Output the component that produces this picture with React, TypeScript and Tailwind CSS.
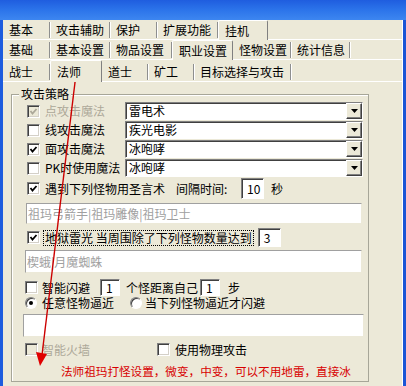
import React from "react";

type Tab = { t: string; w: string; sel?: boolean; pl?: string };

const row1: Tab[] = [
  { t: "基本", w: "w-[47px]" },
  { t: "攻击辅助", w: "w-[60px]" },
  { t: "保护", w: "w-[47px]" },
  { t: "扩展功能", w: "w-[61px]" },
  { t: "挂机", w: "w-[50px]", sel: true },
];
const row2: Tab[] = [
  { t: "基础", w: "w-[47px]" },
  { t: "基本设置", w: "w-[60px]" },
  { t: "物品设置", w: "w-[62px]" },
  { t: "职业设置", w: "w-[61px]", sel: true },
  { t: "怪物设置", w: "w-[58px]" },
  { t: "统计信息", w: "w-[59px]" },
];
const row3: Tab[] = [
  { t: "战士", w: "w-[47px]" },
  { t: "法师", w: "w-[52px]", sel: true },
  { t: "道士", w: "w-[46px]" },
  { t: "矿工", w: "w-[46px]" },
  { t: "目标选择与攻击", w: "w-[97px]" },
];

function TabRow({ tabs, h }: { tabs: Tab[]; h: string }) {
  return (
    <div className={`flex items-end border-b border-white ${h}`}>
      {tabs.map((tb) =>
        tb.sel ? (
          <div
            key={tb.t}
            className={`${tb.w} relative z-10 -mb-px flex h-[calc(100%+1px)] items-center self-stretch whitespace-nowrap rounded-t-[2px] border-l border-t border-r border-white border-r-[#808080] bg-[#ECE9D8] pl-[6px] text-[12px] leading-[14px]`}
          >
            {tb.t}
          </div>
        ) : (
          <div
            key={tb.t}
            className={`${tb.w} mb-[1px] flex h-[16px] items-center whitespace-nowrap border-r border-[#8E8F8F] pl-[6px] text-[12px] leading-[14px] shadow-[1px_0_0_#ffffff]`}
          >
            {tb.t}
          </div>
        )
      )}
    </div>
  );
}

function Check({ checked, disabled }: { checked?: boolean; disabled?: boolean }) {
  return (
    <span
      className={`flex h-[13px] w-[13px] shrink-0 items-center justify-center border border-b-white border-l-[#808080] border-r-white border-t-[#808080] shadow-[inset_1px_1px_0_#404040,inset_-1px_-1px_0_#D4D0C8] ${
        disabled ? "bg-[#ECE9D8]" : "bg-white"
      }`}
    >
      {checked && (
        <svg width="9" height="9" viewBox="0 0 9 9">
          <polyline
            points="1.5,4 3.5,6.5 7.5,2"
            fill="none"
            stroke={disabled ? "#ACA899" : "#000"}
            strokeWidth="1.8"
          />
        </svg>
      )}
    </span>
  );
}

function Radio({ on }: { on?: boolean }) {
  return (
    <span className="flex h-[12px] w-[12px] shrink-0 items-center justify-center rounded-full border border-b-white border-l-[#808080] border-r-white border-t-[#808080] bg-white shadow-[inset_1px_1px_0_#404040]">
      {on && <span className="h-[4px] w-[4px] rounded-full bg-black" />}
    </span>
  );
}

function Combo({ text }: { text: string }) {
  return (
    <div className="flex h-[18px] w-[238px] items-stretch border border-b-white border-l-[#808080] border-r-white border-t-[#808080] bg-white shadow-[inset_1px_1px_0_#404040]">
      <div className="flex flex-1 items-center pl-[3px] leading-[14px]">{text}</div>
      <div className="flex w-[16px] items-center justify-center border border-b-[#404040] border-l-white border-r-[#404040] border-t-white bg-[#ECE9D8] shadow-[inset_-1px_-1px_0_#808080]">
        <svg width="7" height="4" viewBox="0 0 7 4">
          <polygon points="0,0 7,0 3.5,4" fill="#000" />
        </svg>
      </div>
    </div>
  );
}

function Field({ text, w, h, extra }: { text?: string; w: string; h: string; extra?: string }) {
  return (
    <div
      className={`${w} ${h} ${extra ?? ""} flex items-center border border-b-[#ECE9D8] border-l-[#A0A0A0] border-r-[#ECE9D8] border-t-[#A0A0A0] bg-white pl-[1px] leading-[14px] text-[#A0A0A0]`}
    >
      {text}
    </div>
  );
}

function NumBox({ v, w, h }: { v: string; w: string; h: string }) {
  return (
    <div
      className={`${w} ${h} flex items-center border border-b-white border-l-[#808080] border-r-white border-t-[#808080] bg-white pl-[5px] leading-[14px] shadow-[inset_1px_1px_0_#404040]`}
    >
      {v}
    </div>
  );
}

export default function App() {
  return (
    <div className="relative h-[386px] w-[406px] overflow-hidden bg-[#ECE9D8] font-['Noto_Sans_CJK_SC','Noto_Sans',sans-serif] text-[12px] text-black">
      <div className="h-[20px] bg-gradient-to-b from-[#1F5DDF] via-[#2C74EA] to-[#3D86F0]" />
      <div className="flex h-[366px]">
        <div className="w-[3px] bg-[#1D5CDE]" />
        <div className="flex flex-1 flex-col">
          <TabRow tabs={row1} h="h-[20px]" />
          <TabRow tabs={row2} h="h-[20px]" />
          <TabRow tabs={row3} h="h-[22px]" />

          <fieldset className="ml-[8px] mt-[5px] w-[358px] border border-[#A7A698] pb-[3px] pl-[13px] shadow-[inset_1px_1px_0_#ffffff]">
            <legend className="-ml-[6px] bg-[#ECE9D8] px-[2px] text-[12px] leading-[14px]">攻击策略</legend>

            <div className="ml-[2px] flex flex-col gap-[1px] pt-[1px]">
              {[
                { l: "点攻击魔法", v: "雷电术", c: true, d: true },
                { l: "线攻击魔法", v: "疾光电影" },
                { l: "面攻击魔法", v: "冰咆哮", c: true },
                { l: "PK时使用魔法", v: "冰咆哮" },
              ].map((r) => (
                <div key={r.l} className="flex h-[18px] items-center">
                  <Check checked={r.c} disabled={r.d} />
                  <span className={`ml-[5px] w-[80px] leading-[14px] ${r.d ? "text-[#ACA899]" : ""}`}>{r.l}</span>
                  <Combo text={r.v} />
                </div>
              ))}
            </div>

            <div className="ml-[2px] mt-[1px] flex h-[21px] items-center">
              <Check checked />
              <span className="ml-[5px] w-[131px] leading-[14px]">遇到下列怪物用圣言术</span>
              <span className="w-[65px] leading-[14px]">间隔时间:</span>
              <NumBox v="10" w="w-[23px]" h="h-[21px]" />
              <span className="ml-[7px] leading-[14px]">秒</span>
            </div>

            <Field text="祖玛弓箭手|祖玛雕像|祖玛卫士" w="w-[336px]" h="h-[21px]" extra="mt-[4px] ml-[1px]" />

            <div className="ml-[2px] mt-[4px] flex h-[19px] items-center">
              <Check checked />
              <span className="ml-[3px] whitespace-nowrap border border-dotted border-black px-[1px] leading-[14px]">地狱雷光 当周围除了下列怪物数量达到</span>
              <span className="ml-[4px]">
                <NumBox v="3" w="w-[23px]" h="h-[19px]" />
              </span>
            </div>

            <Field text="楔蛾|月魔蜘蛛" w="w-[337px]" h="h-[23px]" extra="mt-[3px]" />

            <div className="mt-[6px] flex h-[17px] items-center">
              <Check />
              <span className="ml-[4px] w-[58px] leading-[14px]">智能闪避</span>
              <NumBox v="1" w="w-[20px]" h="h-[17px]" />
              <span className="ml-[6px] w-[74px] leading-[14px]">个怪距离自己</span>
              <NumBox v="1" w="w-[20px]" h="h-[17px]" />
              <span className="ml-[8px] leading-[14px]">步</span>
            </div>

            <div className="mt-[1px] flex h-[12px] items-center">
              <Radio on />
              <span className="ml-[5px] w-[88px] leading-[14px]">任意怪物逼近</span>
              <Radio />
              <span className="ml-[3px] leading-[14px]">当下列怪物逼近才闪避</span>
            </div>

            <Field w="w-[341px]" h="h-[23px]" extra="mt-[5px] -ml-[2px]" />

            <div className="mt-[6px] flex h-[13px] items-center">
              <Check disabled />
              <span className="ml-[4px] w-[115px] leading-[14px] text-[#ACA899]">智能火墙</span>
              <Check />
              <span className="ml-[5px] leading-[14px]">使用物理攻击</span>
            </div>

            <div className="ml-[36px] mt-[8px] h-[14px] whitespace-nowrap text-[11.6px] leading-[14px] text-[#D80000]">
              法师祖玛打怪设置，微变，中变，可以不用地雷，直接冰
            </div>
          </fieldset>
        </div>
        <div className="w-[4px] border-l border-white bg-[#1A55D6]" />
      </div>

      <svg className="pointer-events-none absolute left-0 top-0" width="406" height="386" viewBox="0 0 406 386">
        <line x1="76" y1="74" x2="42" y2="355" stroke="#CC0000" strokeWidth="1.4" />
        <polygon points="36,352 47,354 40,366" fill="#E00000" />
      </svg>
    </div>
  );
}
